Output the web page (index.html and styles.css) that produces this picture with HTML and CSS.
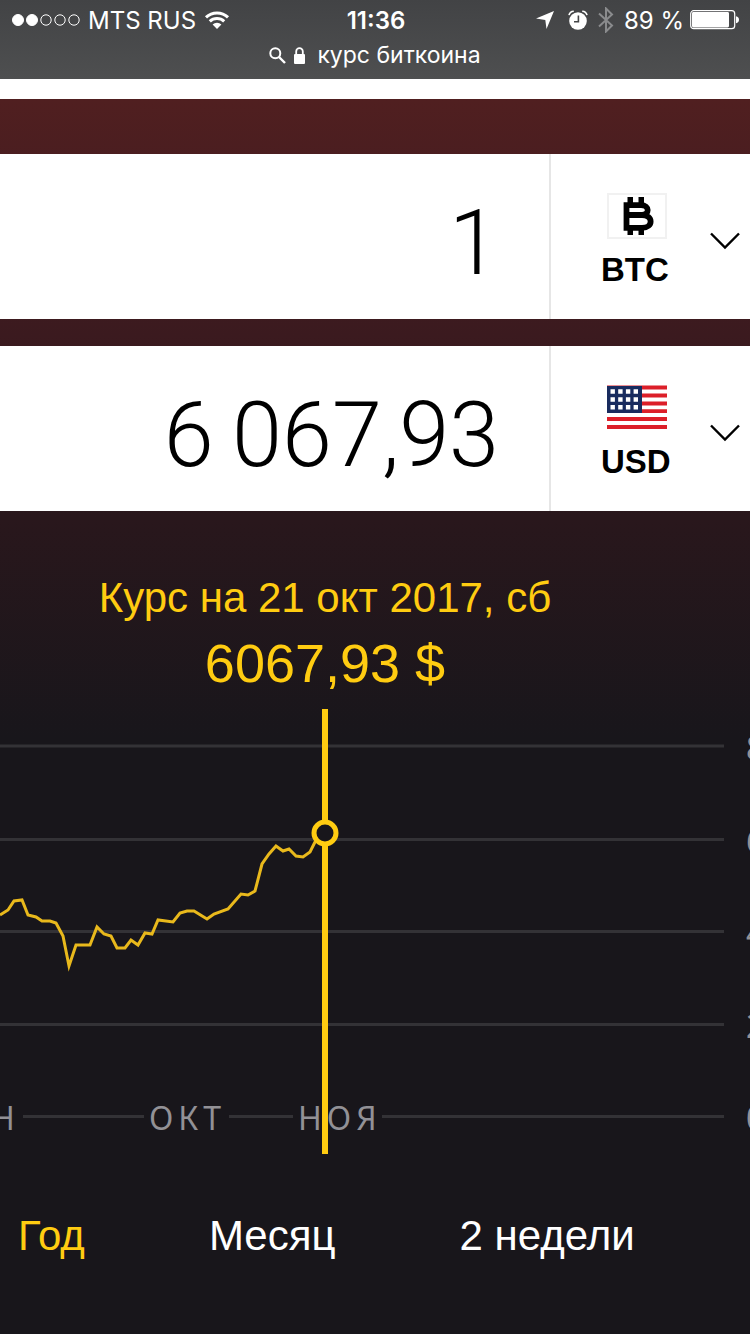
FILE: index.html
```html
<!DOCTYPE html>
<html lang="ru">
<head>
  <meta charset="UTF-8">
  <meta name="viewport" content="width=device-width, initial-scale=1.0">
  <title>курс биткоина</title>
  <link rel="stylesheet" href="styles.css">
</head>
<body>

<header class="browser">
  <div class="status">
    <div class="status-left">
      <svg class="signal" width="68" height="12" viewBox="0 0 68 12" fill="none" stroke="#fff">
        <circle cx="6" cy="6" r="5.5" fill="#fff"/>
        <circle cx="20" cy="6" r="5.5" fill="#fff"/>
        <circle cx="34" cy="6" r="5.2"/>
        <circle cx="48" cy="6" r="5.2"/>
        <circle cx="62" cy="6" r="5.2"/>
      </svg>
      <span>MTS RUS</span>
      <svg width="26" height="20" viewBox="0 0 26 20" fill="none" stroke="#fff" stroke-width="3">
        <path d="M2 7.3a16 16 0 0 1 22 0"/>
        <path d="M5.8 11.4a10.4 10.4 0 0 1 14.4 0"/>
        <path d="M13 19l-4.4-4.5a6.2 6.2 0 0 1 8.8 0z" fill="#fff" stroke="none"/>
      </svg>
    </div>
    <div class="time">11:36</div>
    <div class="status-right">
      <svg class="location" width="18" height="18" viewBox="0 0 18 18" fill="#fff"><path d="M18 0L10.5 18 9.3 9 0 7.6z"/></svg>
      <svg width="20" height="20" viewBox="0 0 20 20">
        <circle cx="10" cy="11" r="8.8" fill="#fff"/>
        <path d="M1 5.2A5 5 0 0 1 5.8 1.2M19 5.2A5 5 0 0 0 14.2 1.2" fill="none" stroke="#fff" stroke-width="1.6"/>
        <path d="M10.4 5.5v6.3H6" fill="none" stroke="#454648" stroke-width="1.6"/>
      </svg>
      <svg width="16" height="26" viewBox="0 0 16 26" fill="none" stroke="#8a8b8d" stroke-width="2"><path d="M1 6.5l13 12-6 6V1.5l6 6-13 12"/></svg>
      <span class="percent">89 %</span>
      <svg width="50" height="20" viewBox="0 0 50 20">
        <rect x=".7" y=".7" width="44" height="18" rx="3" fill="none" stroke="#fff" stroke-width="1.2"/>
        <rect x="2" y="2" width="37" height="15.4" rx="1.4" fill="#fff"/>
        <path d="M46 6.2c4 .6 4 6.4 0 7z" fill="#fff"/>
      </svg>
    </div>
  </div>
  <div class="address">
    <svg width="17" height="17" viewBox="0 0 17 17" fill="none" stroke="#fff" stroke-width="2"><circle cx="6.3" cy="6.3" r="5"/><path d="M10 10l6 6" stroke-width="2.4"/></svg>
    <svg class="lock" width="11" height="17" viewBox="0 0 11 17"><rect y="7" width="11" height="10" rx="1" fill="#fff"/><path d="M2.2 8V4.4a3.3 3.3 0 0 1 6.6 0V8" fill="none" stroke="#fff" stroke-width="1.8"/></svg>
    <span>курс биткоина</span>
  </div>
</header>

<main class="converter">
  <div class="row">
    <input class="amount" type="text" value="1" aria-label="Сумма BTC">
    <label class="currency">
      <svg width="60" height="46" viewBox="0 0 60 46">
        <rect x="1" y="1" width="58" height="44" fill="#fff" stroke="#f1f1f1" stroke-width="2"/>
        <path d="M20.500 4h5.500v38h-5.500zM31.500 4h5.500v38h-5.500z"/>
        <path d="M19.500 12.200H34c9 0 8.500 9.800 1 9.800H20h15c11.500 0 11.500 12.800 0 12.800H19.500z" fill="#fff" stroke="#000" stroke-width="5.800"/>
      </svg>
      <select aria-label="Валюта">
        <option>BTC</option>
      </select>
      <svg class="chevron" width="30" height="18" viewBox="0 0 30 18" fill="none" stroke="#000" stroke-width="2.400"><path d="M1 1.500l14 14 14-14"/></svg>
    </label>
  </div>

  <div class="row">
    <input class="amount" type="text" value="6&#8201;067,93" aria-label="Сумма USD">
    <label class="currency">
      <svg width="60" height="46" viewBox="0 0 60 46">
        <rect y="1" width="60" height="43" fill="#fff"/>
        <path d="M0 2.500h60M0 10.500h60M0 18.500h60M0 26.200h60M0 34h60M0 42h60" stroke="#dc1f29" stroke-width="3.800"/>
        <rect y="1" width="35" height="27" fill="#182b5e"/>
        <path d="M3.500 6.500h28M3.500 14.500h28M3.500 22.200h28" stroke="#fff" stroke-width="4.400" stroke-dasharray="4.400 3.300"/>
      </svg>
      <select aria-label="Валюта">
        <option>USD</option>
      </select>
      <svg class="chevron" width="30" height="18" viewBox="0 0 30 18" fill="none" stroke="#000" stroke-width="2.400"><path d="M1 1.500l14 14 14-14"/></svg>
    </label>
  </div>

  <section class="rate">
    <p class="date">Курс на 21 окт 2017, сб</p>
    <p class="value">6067,93 $</p>
  </section>

  <svg class="chart" viewBox="0 0 750 446">
    <path class="grid" d="M0 37h724M0 130.500h724M0 222.500h724M0 315.500h724"/>
    <path class="grid" d="M23 407.500h121M229 407.500h64M382 407.500h342"/>
    <g class="axis">
      <text x="-9" y="421">Н</text>
      <text x="149" y="421">ОКТ</text>
      <text x="298" y="421">НОЯ</text>
      <text x="746" y="51">8</text>
      <text x="746" y="144">6</text>
      <text x="746" y="236">4</text>
      <text x="746" y="329">2</text>
      <text x="746" y="421">0</text>
    </g>
    <polyline class="line" points="0,206 8,201 14,192 22,191 28,206 36,208 42,212 50,212 56,214 63,227 69,257 76,236 90,236 97,218 104,225 111,227 117,239 125,239 131,231 138,236 145,224 152,225 158,211 173,213 180,204 187,202 194,202 207,210 214,205 228,200 241,185 248,186 255,182 262,155 269,145 276,137 283,142 289,140 296,147 303,148 310,143 316,131 325,124"/>
    <path class="cursor" d="M325 0v445"/>
    <circle class="dot" cx="325" cy="124" r="11"/>
  </svg>

  <nav class="periods">
    <a class="active" href="#year">Год</a>
    <a href="#month">Месяц</a>
    <a href="#weeks">2 недели</a>
  </nav>
</main>

</body>
</html>
```
FILE: styles.css
```css
* {
  box-sizing: border-box;
}

body {
  margin: 0;
  background: #fff;
  font-family: "Liberation Sans", Arial, sans-serif;
  overflow-x: hidden;
}

svg {
  display: block;
  flex-shrink: 0;
}

/* browser bar */
.browser {
  height: 79px;
  margin-bottom: 20px;
  background: linear-gradient(#424345, #4e4f50);
  color: #fff;
  font-family: Inter, sans-serif;
  font-size: 24px;
}

.status {
  display: grid;
  grid-template-columns: 1fr auto 1fr;
  align-items: center;
  height: 40px;
  padding: 0 10px 0 12px;
}

.status-left,
.status-right {
  display: flex;
  align-items: center;
  gap: 10px;
}

.status-left {
  gap: 8px;
}

.status-right {
  justify-content: flex-end;
}

.time {
  font-weight: 600;
}

.location {
  margin-right: 4px;
}

.percent {
  margin-right: -4px;
  white-space: nowrap;
}

.address {
  display: flex;
  justify-content: center;
  align-items: center;
  gap: 8px;
  height: 30px;
  font-size: 23px;
}

.lock {
  margin-right: 4px;
}

/* converter */
.converter {
  min-height: calc(100vh - 99px);
  padding-top: 55px;
  background: linear-gradient(#501f20 0, #3b1a1f 236px, #29171c 420px, #18161b 640px);
}

.row {
  display: flex;
  height: 165px;
  margin-bottom: 27px;
  background: #fff;
}

.amount {
  flex: 1;
  min-width: 0;
  padding: 14px 50px 0 0;
  border: 0;
  background: none;
  color: #000;
  font-family: Roboto, sans-serif;
  font-size: 90px;
  font-weight: 300;
  text-align: right;
}

.currency {
  position: relative;
  display: flex;
  flex-direction: column;
  align-items: flex-start;
  width: 201px;
  padding: 39px 0 0 56px;
  border-left: 2px solid #e6e6e6;
}

.currency select {
  width: 80px;
  height: 40px;
  margin: 10px 0 0 -6px;
  padding: 0;
  border: 0;
  background: none;
  appearance: none;
  color: #000;
  font: bold 33px "Liberation Sans", Arial, sans-serif;
}

.chevron {
  position: absolute;
  top: 78px;
  right: 10px;
}

/* rate over the chart cursor */
.rate {
  width: 86.66%;
  padding-top: 36px;
  color: #ffcc11;
  text-align: center;
}

.rate p {
  margin: 0;
}

.date {
  font-size: 42px;
  line-height: 48px;
}

.value {
  padding-top: 9px;
  font-size: 54px;
  line-height: 64px;
}

.chart {
  width: 100%;
  margin-top: 14px;
}

.grid {
  fill: none;
  stroke: #333236;
  stroke-width: 3;
}

.axis {
  fill: #929196;
  font-family: "Noto Sans", sans-serif;
  font-size: 32px;
  letter-spacing: 5px;
}

.line {
  fill: none;
  stroke: #e9b91c;
  stroke-width: 3;
}

.cursor {
  stroke: #ffcc11;
  stroke-width: 6;
}

.dot {
  fill: #18161b;
  stroke: #ffcc11;
  stroke-width: 5;
}

.periods {
  display: flex;
  gap: 124px;
  padding: 57px 18px;
  font-size: 42px;
  line-height: 48px;
  white-space: nowrap;
}

.periods a {
  color: #fff;
  text-decoration: none;
}

.periods .active {
  color: #ffcc11;
}
```
